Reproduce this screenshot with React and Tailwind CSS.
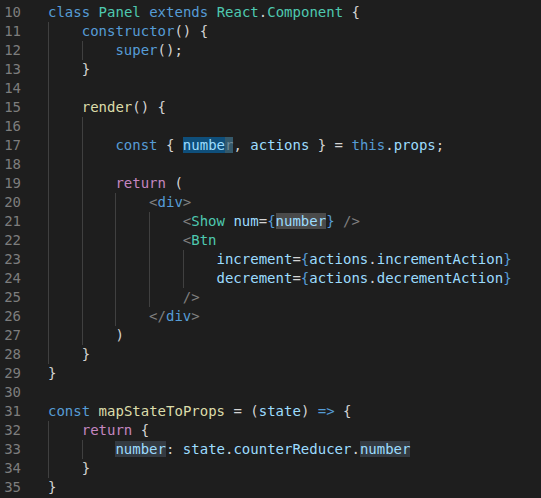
const c = {
  kw: 'text-[#569cd6]',
  type: 'text-[#4ec9b0]',
  fn: 'text-[#dcdcaa]',
  v: 'text-[#9cdcfe]',
  p: 'text-[#d4d4d4]',
  ctl: 'text-[#c586c0]',
  tag: 'text-[#808080]',
  dim: 'text-[#6f8a98]',
}

const lines = [
  { n: 10, g: 0, t: [['class', 'kw'], [' '], ['Panel', 'type'], [' '], ['extends', 'kw'], [' '], ['React', 'type'], ['.', 'p'], ['Component', 'type'], [' {', 'p']] },
  { n: 11, g: 1, t: [['constructor', 'kw'], ['() {', 'p']] },
  { n: 12, g: 2, t: [['super', 'kw'], ['();', 'p']] },
  { n: 13, g: 1, t: [['}', 'p']] },
  { n: 14, g: 1, t: [] },
  { n: 15, g: 1, t: [['render', 'fn'], ['() {', 'p']] },
  { n: 16, g: 2, t: [] },
  { n: 17, g: 2, t: [['const', 'kw'], [' { ', 'p'], ['numbe', 'v', 'sel'], ['r', 'dim', 'cur'], [', ', 'p'], ['actions', 'v'], [' } = ', 'p'], ['this', 'kw'], ['.', 'p'], ['props', 'v'], [';', 'p']] },
  { n: 18, g: 2, t: [] },
  { n: 19, g: 2, t: [['return', 'ctl'], [' (', 'p']] },
  { n: 20, g: 3, t: [['<', 'tag'], ['div', 'kw'], ['>', 'tag']] },
  { n: 21, g: 4, t: [['<', 'tag'], ['Show', 'type'], [' '], ['num', 'v'], ['=', 'p'], ['{', 'kw'], ['number', 'v', 'hl'], ['}', 'kw'], [' '], ['/>', 'tag']] },
  { n: 22, g: 4, t: [['<', 'tag'], ['Btn', 'type']] },
  { n: 23, g: 5, t: [['increment', 'v'], ['=', 'p'], ['{', 'kw'], ['actions', 'v'], ['.', 'p'], ['incrementAction', 'v'], ['}', 'kw']] },
  { n: 24, g: 5, t: [['decrement', 'v'], ['=', 'p'], ['{', 'kw'], ['actions', 'v'], ['.', 'p'], ['decrementAction', 'v'], ['}', 'kw']] },
  { n: 25, g: 4, t: [['/>', 'tag']] },
  { n: 26, g: 3, t: [['</', 'tag'], ['div', 'kw'], ['>', 'tag']] },
  { n: 27, g: 2, t: [[')', 'p']] },
  { n: 28, g: 1, t: [['}', 'p']] },
  { n: 29, g: 0, t: [['}', 'p']] },
  { n: 30, g: 0, t: [] },
  { n: 31, g: 0, t: [['const', 'kw'], [' '], ['mapStateToProps', 'fn'], [' = (', 'p'], ['state', 'v'], [') ', 'p'], ['=>', 'kw'], [' {', 'p']] },
  { n: 32, g: 1, t: [['return', 'ctl'], [' {', 'p']] },
  { n: 33, g: 2, t: [['number', 'v', 'hl2'], [': ', 'p'], ['state', 'v'], ['.', 'p'], ['counterReducer', 'v'], ['.', 'p'], ['number', 'v', 'hl2']] },
  { n: 34, g: 1, t: [['}', 'p']] },
  { n: 35, g: 0, t: [['}', 'p']] },
]

const bg = {
  sel: 'bg-[#0f4f7b]',
  cur: 'bg-[#35596b]',
  hl: 'bg-[#4a4a4a]',
  hl2: 'bg-[#343a41]',
}

export default function App() {
  return (
    <div className="w-[541px] h-[498px] bg-[#1e1e1e] pt-[3px] overflow-hidden font-['DejaVu_Sans_Mono',monospace] text-[14px] leading-[19px] whitespace-pre">
      {lines.map((line) => (
        <div key={line.n} className="flex h-[19px]">
          <div className="w-[48px] shrink-0 pr-[27px] text-right text-[#7d7d7d]">{line.n}</div>
          <div className="flex">
            {Array.from({ length: line.g }).map((_, i) => (
              <span key={i} className="inline-block w-[4ch] h-[19px] border-l border-[#404040]" />
            ))}
            <span>
              {line.t.map(([text, color, mark], i) => (
                <span key={i} className={`${c[color] ?? c.p} ${mark ? bg[mark] : ''}`}>{text}</span>
              ))}
            </span>
          </div>
        </div>
      ))}
    </div>
  )
}
